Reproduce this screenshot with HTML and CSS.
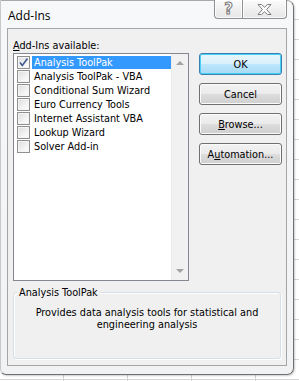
FILE: index.html
```html
<!DOCTYPE html>
<html lang="en">
<head>
    <meta charset="UTF-8">
    <title>Add-Ins</title>
    <link rel="stylesheet" href="styles.css">
</head>
<body>
    <div class="window">
        <div class="titlebar">
            <span class="title">Add-Ins</span>
            <div class="caption-buttons">
                <div class="cap help">?</div>
                <div class="cap close">
                    <svg width="17" height="13" viewBox="0 0 17 13">
                        <path d="M2 1.5 L5.5 1.5 L8.5 4.3 L11.5 1.5 L15 1.5 L10.6 6.5 L15 11.5 L11.5 11.5 L8.5 8.7 L5.5 11.5 L2 11.5 L6.4 6.5 Z" fill="#fdfdfd" stroke="#7d7d7d" stroke-width="1"/>
                    </svg>
                </div>
            </div>
        </div>

        <div class="client">
            <div class="main">
                <div class="left">
                    <div class="label"><u>A</u>dd-Ins available:</div>
                    <div class="listbox">
                        <div class="items">
                            <div class="item selected">
                                <span class="check checked">
                                    <svg width="11" height="11" viewBox="0 0 11 11">
                                        <path d="M2 5.5 L4.3 8.5 L9.5 1.5" fill="none" stroke="#3e5a92" stroke-width="1.6"/>
                                    </svg>
                                </span>
                                <span class="name">Analysis ToolPak</span>
                            </div>
                            <div class="item"><span class="check"></span><span class="name">Analysis ToolPak - VBA</span></div>
                            <div class="item"><span class="check"></span><span class="name">Conditional Sum Wizard</span></div>
                            <div class="item"><span class="check"></span><span class="name">Euro Currency Tools</span></div>
                            <div class="item"><span class="check"></span><span class="name">Internet Assistant VBA</span></div>
                            <div class="item"><span class="check"></span><span class="name">Lookup Wizard</span></div>
                            <div class="item"><span class="check"></span><span class="name">Solver Add-in</span></div>
                        </div>
                        <div class="scrollbar">
                            <span class="arrow up"></span>
                            <span class="arrow down"></span>
                        </div>
                    </div>
                </div>

                <div class="buttons">
                    <button class="btn default">OK</button>
                    <button class="btn">Cancel</button>
                    <button class="btn"><u>B</u>rowse...</button>
                    <button class="btn">A<u>u</u>tomation...</button>
                </div>
            </div>

            <div class="groupbox">
                <span class="legend">Analysis ToolPak</span>
                <p class="description">Provides data analysis tools for statistical and engineering analysis</p>
            </div>
        </div>
    </div>
</body>
</html>
```

FILE: styles.css
```css
* {
    margin: 0;
    padding: 0;
    box-sizing: border-box;
}

body {
    width: 299px;
    height: 381px;
    overflow: hidden;
    font-family: 'DejaVu Sans Condensed', 'DejaVu Sans', sans-serif;
    font-size: 10.8px;
    color: #000;
    background-color: #ffffff;
    background-image:
        repeating-linear-gradient(to bottom, transparent 0, transparent 19px, #d6d6d6 19px, #d6d6d6 20px),
        repeating-linear-gradient(to right, transparent 0, transparent 63px, #d6d6d6 63px, #d6d6d6 64px);
}

.window {
    width: 294px;
    height: 375px;
    display: flex;
    flex-direction: column;
    padding: 0 6px 8px 6px;
    background: linear-gradient(to bottom, #f7f8f9 0%, #f1f2f3 100%);
    border: 1px solid #6f6f6f;
    border-left-color: #c8c8c8;
    border-top-color: #a9a9a9;
    border-radius: 0 7px 7px 6px;
    box-shadow: 1px 1px 2px rgba(0, 0, 0, 0.2);
}

.titlebar {
    height: 27px;
    display: flex;
    justify-content: space-between;
    align-items: flex-start;
}

.title {
    font-family: 'Open Sans', 'DejaVu Sans', sans-serif;
    font-size: 12px;
    margin-top: 6px;
    margin-left: 1px;
    color: #000;
}

.caption-buttons {
    display: flex;
    margin-top: -1px;
}

.cap {
    height: 19px;
    display: flex;
    align-items: center;
    justify-content: center;
    border: 1px solid #8f8f8f;
    border-top: none;
    background: linear-gradient(to bottom, #fbfbfb 0%, #f0f0f0 50%, #e6e6e6 100%);
    box-shadow: inset 0 0 0 1px rgba(255, 255, 255, 0.8);
}

.help {
    width: 28px;
    border-radius: 0 0 0 4px;
    border-right: none;
    font-family: 'DejaVu Sans', sans-serif;
    font-size: 15px;
    font-weight: bold;
    color: #fdfdfd;
    -webkit-text-stroke: 1px #7a7a7a;
    padding-bottom: 1px;
}

.close {
    width: 45px;
    border-radius: 0 0 4px 0;
}

.client {
    flex: 1;
    background: #f0f0f0;
    border: 1px solid #a5a5a5;
    padding: 10px 5px 6px 5px;
    display: flex;
    flex-direction: column;
}

.main {
    display: flex;
    gap: 10px;
}

.label {
    height: 14px;
    line-height: 13px;
}

.listbox {
    width: 176px;
    height: 228px;
    border: 1px solid #828790;
    background: #ffffff;
    display: flex;
}

.items {
    flex: 1;
    padding: 2px 0 0 3px;
}

.item {
    height: 14px;
    display: flex;
    align-items: flex-start;
}

.check {
    width: 13px;
    height: 13px;
    flex: none;
    border: 1px solid #8f8f8f;
    background: linear-gradient(135deg, #dcdcdc 0%, #f3f3f3 60%, #ffffff 100%);
    box-shadow: inset 0 0 0 1px #f4f4f4;
    display: flex;
    align-items: center;
    justify-content: center;
}

.name {
    margin-left: 2px;
    padding: 0 2px;
    height: 13px;
    line-height: 13px;
    white-space: nowrap;
}

.selected .name {
    flex: 1;
    background: #3399ff;
    color: #ffffff;
}

.scrollbar {
    width: 17px;
    flex: none;
    background: #f1f1f1;
    border-left: 1px solid #ececec;
    display: flex;
    flex-direction: column;
    justify-content: space-between;
    align-items: center;
    padding: 7px 0 7px 0;
}

.arrow {
    width: 0;
    height: 0;
    border-left: 4px solid transparent;
    border-right: 4px solid transparent;
}

.arrow.up {
    border-bottom: 4px solid #a3a3a3;
}

.arrow.down {
    border-top: 4px solid #a3a3a3;
}

.buttons {
    display: flex;
    flex-direction: column;
    gap: 8px;
    padding-top: 14px;
}

.btn {
    width: 83px;
    height: 22px;
    font-family: inherit;
    font-size: 10.8px;
    color: #000;
    border: 1px solid #707070;
    border-radius: 3px;
    background: linear-gradient(to bottom, #f2f2f2 0%, #ebebeb 49%, #dddddd 50%, #cfcfcf 100%);
    box-shadow: inset 0 0 0 1px #fbfbfb;
}

.btn.default {
    border-color: #3c7fb1;
    box-shadow: inset 0 0 0 1px #48d0f4;
    background: linear-gradient(to bottom, #eaf6fd 0%, #d9f0fc 49%, #bee6fd 50%, #a7d9f5 100%);
}

.groupbox {
    position: relative;
    margin-top: 11px;
    flex: 1;
    border: 1px solid #d5dfe5;
    border-radius: 3px;
    box-shadow: inset 1px 1px 0 #ffffff, 1px 1px 0 #ffffff;
    padding: 14px 8px 0;
}

.legend {
    position: absolute;
    top: -7px;
    left: 3px;
    padding: 0 2px;
    background: #f0f0f0;
    line-height: 13px;
}

.description {
    text-align: center;
    line-height: 12px;
}
```
